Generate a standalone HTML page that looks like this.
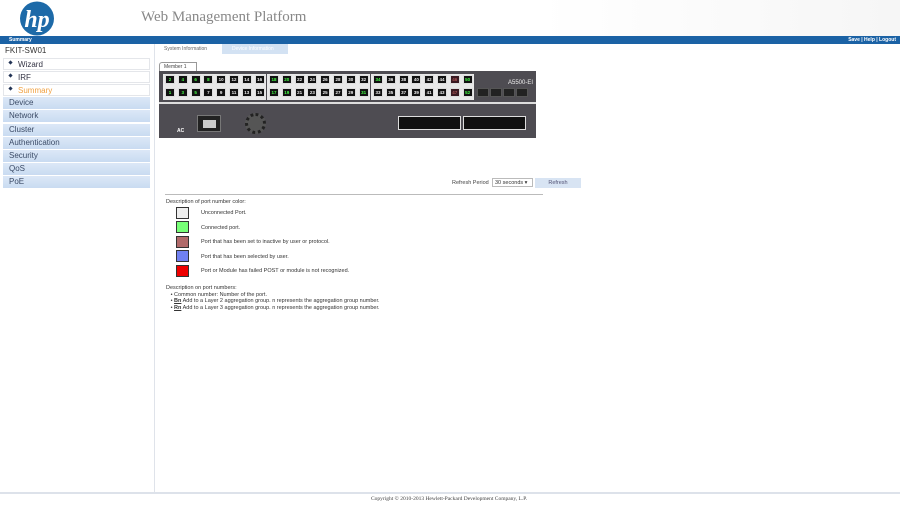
<!DOCTYPE html>
<html><head><meta charset="utf-8"><style>
*{margin:0;padding:0;box-sizing:border-box}
body{width:900px;height:506px;position:relative;background:#fff;font-family:"Liberation Sans",Arial,sans-serif;overflow:hidden}
.a{position:absolute}
.side{left:0;top:44px;width:155px;height:449px;border-right:1px solid #dfe3ea;background:#fff}
.it{position:absolute;left:3px;width:147px;height:12px;font-size:8px;color:#334;padding-left:14px;line-height:12px;border:1px solid #e4e6ea;background:#fff}
.it:before{content:"";position:absolute;left:5px;top:2px;width:3px;height:3px;background:#235;transform:rotate(45deg)}
.mn{position:absolute;left:3px;width:147px;height:12px;font-size:8px;color:#3a4a66;padding-left:6px;line-height:12px;background:linear-gradient(#dce8f7,#c9dbf1)}
.row{position:absolute;display:flex;gap:2.8px}
.p{width:10px;height:9px;background:#111;border:1px solid #ddd;color:#eee;font-size:4.5px;line-height:7px;text-align:center;font-weight:bold}
.g{color:#4f4}
.r{background:#3a1a22;color:#a55}
.grp{position:absolute;background:#e8e8e8;height:26px;top:74px}
.sq{position:absolute;left:176px;width:13px;height:12px;border:1px solid #333}
.lt{position:absolute;left:201px;font-size:5.5px;color:#333}
</style></head><body>
<div class="a" style="left:0;top:0;width:900px;height:36px;background:linear-gradient(90deg,#fff 0,#fff 60%,#f6f6f6)"></div>
<svg class="a" style="left:19px;top:1px" width="36" height="35" viewBox="0 0 36 35"><circle cx="18" cy="17.5" r="17" fill="#1d6aa8"/><text x="18" y="26" text-anchor="middle" font-family="Liberation Serif" font-style="italic" font-weight="bold" font-size="24" fill="#fff">hp</text></svg>
<div class="a" style="left:141px;top:9px;font-family:'Liberation Serif',serif;font-size:15px;color:#888">Web Management Platform</div>
<div class="a" style="left:0;top:36px;width:900px;height:8px;background:#1b62a5"></div>
<div class="a" style="left:9px;top:37px;font-size:5px;color:#fff;font-weight:bold">Summary</div>
<div class="a" style="right:4px;top:37px;font-size:5px;color:#fff;font-weight:bold">Save | Help | Logout</div>
<div class="a side"></div>
<div class="a" style="left:5px;top:46px;font-size:8px;color:#333">FKIT-SW01</div>
<div class="it" style="top:58px">Wizard</div>
<div class="it" style="top:71px">IRF</div>
<div class="it" style="top:84px;color:#f0a040">Summary</div>
<div class="mn" style="top:97px">Device</div>
<div class="mn" style="top:110px">Network</div>
<div class="mn" style="top:124px">Cluster</div>
<div class="mn" style="top:137px">Authentication</div>
<div class="mn" style="top:150px">Security</div>
<div class="mn" style="top:163px">QoS</div>
<div class="mn" style="top:176px">PoE</div>
<div class="a" style="left:164px;top:46px;font-size:5px;color:#666">System Information</div>
<div class="a" style="left:222px;top:44px;width:66px;height:10px;background:#d3e2f3;font-size:5px;color:#fff;padding:2px 0 0 10px">Device Information</div>
<div class="a" style="left:159px;top:62px;width:38px;height:9px;border:1px solid #999;border-bottom:none;border-radius:3px 0 0 0;font-size:5px;color:#444;padding:1px 4px">Member 1</div>
<div class="a" style="left:159px;top:71px;width:377px;height:32px;background:#4e4c52"></div>
<div class="a" style="left:159px;top:102px;width:377px;height:2px;background:#ddd"></div>
<div class="a" style="left:159px;top:104px;width:377px;height:34px;background:#4e4c52"></div>
<div class="grp" style="left:163px;width:103px"></div>
<div class="grp" style="left:267px;width:103px"></div>
<div class="grp" style="left:371px;width:103px"></div>
<div class="row" style="left:165px;top:75px"><div class="p g">2</div><div class="p g">4</div><div class="p g">6</div><div class="p g">8</div><div class="p">10</div><div class="p">12</div><div class="p">14</div><div class="p">16</div></div>
<div class="row" style="left:165px;top:88px"><div class="p g">1</div><div class="p g">3</div><div class="p g">5</div><div class="p">7</div><div class="p">9</div><div class="p">11</div><div class="p">13</div><div class="p">15</div></div>
<div class="row" style="left:269px;top:75px"><div class="p g">18</div><div class="p g">20</div><div class="p">22</div><div class="p">24</div><div class="p">26</div><div class="p">28</div><div class="p">30</div><div class="p">32</div></div>
<div class="row" style="left:269px;top:88px"><div class="p g">17</div><div class="p g">19</div><div class="p">21</div><div class="p">23</div><div class="p">25</div><div class="p">27</div><div class="p">29</div><div class="p g">31</div></div>
<div class="row" style="left:373px;top:75px"><div class="p g">34</div><div class="p">36</div><div class="p">38</div><div class="p">40</div><div class="p">42</div><div class="p">44</div><div class="p r">46</div><div class="p g">50</div></div>
<div class="row" style="left:373px;top:88px"><div class="p">33</div><div class="p">35</div><div class="p">37</div><div class="p">39</div><div class="p">41</div><div class="p">43</div><div class="p r">47</div><div class="p g">52</div></div>
<div class="row" style="left:477px;top:88px;gap:1px"><div class="p r" style="width:12px;background:#222;border-color:#555"></div><div class="p r" style="width:12px;background:#222;border-color:#555"></div><div class="p" style="width:12px;background:#222;border-color:#555"></div><div class="p r" style="width:12px;background:#222;border-color:#555"></div></div>
<div class="a" style="left:508px;top:80px;font-size:6px;color:#eee">A5500-EI</div>
<div class="a" style="left:177px;top:128px;font-size:5px;color:#fff;font-weight:bold">AC</div>
<div class="a" style="left:197px;top:115px;width:24px;height:17px;background:#222;border:1px solid #777"><div style="margin:4px 5px;width:13px;height:8px;background:#ccc"></div></div>
<div class="a" style="left:245px;top:113px;width:21px;height:21px;border-radius:50%;border:3px dotted #222;background:#555"></div>
<div class="a" style="left:398px;top:116px;width:63px;height:14px;background:#111;border:1px solid #ddd"></div>
<div class="a" style="left:463px;top:116px;width:63px;height:14px;background:#111;border:1px solid #ddd"></div>
<div class="a" style="left:452px;top:180px;font-size:5.5px;color:#444">Refresh Period</div>
<div class="a" style="left:492px;top:178px;width:41px;height:9px;border:1px solid #bbb;font-size:5.5px;color:#333;padding:1px 2px">30 seconds ▾</div>
<div class="a" style="left:535px;top:178px;width:46px;height:10px;background:#d8e4f3;font-size:5.5px;color:#557;text-align:center;line-height:10px">Refresh</div>
<div class="a" style="left:165px;top:194px;width:378px;height:1px;background:#bbb"></div>
<div class="a" style="left:166px;top:199px;font-size:5.5px;color:#333">Description of port number color:</div>
<div class="sq" style="top:207px;background:#eee"></div><div class="lt" style="top:210px">Unconnected Port.</div>
<div class="sq" style="top:221px;background:#7f7"></div><div class="lt" style="top:225px">Connected port.</div>
<div class="sq" style="top:236px;background:#b06a6a"></div><div class="lt" style="top:239px">Port that has been set to inactive by user or protocol.</div>
<div class="sq" style="top:250px;background:#7080f0"></div><div class="lt" style="top:254px">Port that has been selected by user.</div>
<div class="sq" style="top:265px;background:#e00"></div><div class="lt" style="top:268px">Port or Module has failed POST or module is not recognized.</div>
<div class="a" style="left:166px;top:285px;font-size:5.5px;color:#333;line-height:6.6px">Description on port numbers:<br>&nbsp;&nbsp;&nbsp;• Common number: Number of the port.<br>&nbsp;&nbsp;&nbsp;• <u><b>Bn</b></u> Add to a Layer 2 aggregation group. n represents the aggregation group number.<br>&nbsp;&nbsp;&nbsp;• <u><b>Rn</b></u> Add to a Layer 3 aggregation group. n represents the aggregation group number.</div>
<div class="a" style="left:0;top:492px;width:900px;height:2px;background:#dde2ea"></div>
<div class="a" style="left:371px;top:496px;font-family:'Liberation Serif',serif;font-size:5.5px;color:#444">Copyright © 2010-2013 Hewlett-Packard Development Company, L.P.</div>
</body></html>
